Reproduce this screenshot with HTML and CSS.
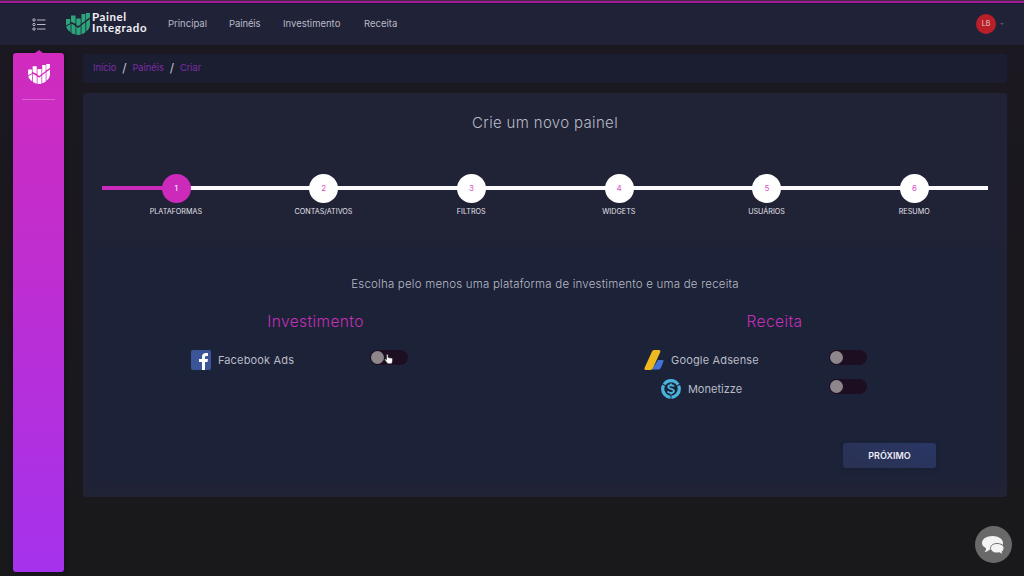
FILE: index.html
```html
<!DOCTYPE html>
<html lang="pt-BR">
<head>
<meta charset="utf-8">
<title>Painel Integrado</title>
<link rel="stylesheet" href="styles.css">
</head>
<body>
<svg class="defs" width="0" height="0" aria-hidden="true">
  <symbol id="mark" viewBox="0 0 24 22">
    <path d="M0 6h4.200v4.300L0 12.500zM5 2.500h4.500v8.300L5 8.800zM10.300 5.500h4.400v5.700l-2.600 2-1.800-1.500zM15.500 1h3.900v6.700l-3.900 3zM20 0h4v4.500L20 7zM.2 13.600L4.600 11v8.200C2.200 17.800.7 15.800.2 13.600zM5.400 10.600l4.100 2.500v8.500c-1.500-.2-2.900-.8-4.100-1.700zM10.300 13.700l1.800 1.300 2.600-2v8.600q-2.200.5-4.400.2zM15.500 12.300l3.900-3v10c-1.200 1-2.500 1.600-3.900 2zM20.200 8.800L24 6v5.500c0 2.800-1.500 5.300-3.800 7z"/>
  </symbol>
</svg>
<header class="topbar">
  <svg class="menu-icon" viewBox="0 0 14 13"><g fill="none" stroke="#b9bac5"><circle cx="2" cy="2" r="1.200"/><circle cx="2" cy="6.500" r="1.200"/><circle cx="2" cy="11" r="1.200"/><path d="M5 2h8.500M5 6.500h8.500M5 11h8.500"/></g></svg>
  <div class="brand">
    <svg class="brand-mark"><use href="#mark"/></svg>
    <div class="brand-name"><span class="brand-top">Painel</span><span class="brand-bottom">Integrado</span></div>
  </div>
  <nav class="nav">
    <a class="nav-principal">Principal</a><a class="nav-paineis">Painéis</a><a class="nav-invest">Investimento</a><a class="nav-receita">Receita</a>
  </nav>
  <div class="user"><span class="avatar">LB</span><span class="caret"></span></div>
</header>
<div class="layout">
  <aside class="sidebar">
    <svg class="side-mark"><use href="#mark"/></svg>
    <hr class="side-rule">
  </aside>
  <main class="main">
    <nav class="crumbs"><a>Início</a><i>/</i><a>Painéis</a><i>/</i><a>Criar</a></nav>
    <section class="card">
      <h1 class="title">Crie um novo painel</h1>
      <ol class="steps">
        <li class="step active"><span class="dot">1</span><span>PLATAFORMAS</span></li>
        <li class="step"><span class="dot">2</span><span>CONTAS/ATIVOS</span></li>
        <li class="step"><span class="dot">3</span><span>FILTROS</span></li>
        <li class="step"><span class="dot">4</span><span>WIDGETS</span></li>
        <li class="step"><span class="dot">5</span><span>USUÁRIOS</span></li>
        <li class="step"><span class="dot">6</span><span>RESUMO</span></li>
      </ol>
      <div class="panel">
        <p class="hint">Escolha pelo menos uma plataforma de investimento e uma de receita</p>
        <div class="columns">
          <div class="column">
            <h2 class="heading">Investimento</h2>
            <div class="row">
              <div class="platform facebook">
                <svg class="icon" viewBox="0 0 20 20"><rect width="20" height="20" rx="2" fill="#3b5598"/><path fill="#fff" d="M11 20v-8H8V9h3V6.800C11 4.200 12.500 3 15 3h2v3h-1.500C14.300 6 14 6.500 14 7.500V9h3l-.5 3H14v8z"/></svg>
                <span>Facebook Ads</span>
              </div>
              <div class="toggle">
                <svg class="pointer" viewBox="0 0 12 13"><path fill="#fff" stroke="#222" stroke-width=".7" d="M3 7.500V1.700c0-1.400 1.900-1.400 1.900 0V5c.5-.5 1.400-.4 1.700.2.600-.4 1.400-.2 1.700.4.800-.4 1.900 0 1.900 1v2.400c0 1.200-.8 1.700-.8 3.200H4.200C4 10.700 2 9.500 1 7.800.4 6.700 1.700 5.900 3 7.500z"/></svg>
              </div>
            </div>
          </div>
          <div class="column">
            <h2 class="heading receita">Receita</h2>
            <div class="row">
              <div class="platform adsense">
                <svg class="icon" viewBox="0 0 20 20"><path fill="#4272d8" d="M14 10h4.500q1.500 0 1 1.500l-2.500 6q-.7 2-2.500 2H8z"/><path fill="#edb91e" d="M8 1.500Q8.600 0 10 0h5q2 0 1.300 2L9 18q-.8 2-2.500 2H1.500Q0 20 .5 18z"/></svg>
                <span>Google Adsense</span>
              </div>
              <div class="toggle"></div>
            </div>
            <div class="row">
              <div class="platform monetizze">
                <svg class="icon" viewBox="0 0 20 20"><circle cx="10" cy="10" r="8.300" fill="none" stroke="#48b4dc" stroke-width="3.200" stroke-dasharray="16.380 1" stroke-dashoffset="-13.500"/><path fill="none" stroke="#48b4dc" stroke-width="1.800" d="M13 7.500C12.500 6 7.200 5.500 7.200 8c0 2.300 5.800 1.500 5.800 4 0 2.600-5.700 2.200-6.200.3M10 4.500v2M10 14v1.500"/></svg>
                <span>Monetizze</span>
              </div>
              <div class="toggle"></div>
            </div>
          </div>
        </div>
        <button class="next">PRÓXIMO</button>
      </div>
    </section>
  </main>
</div>
<button class="chat" aria-label="Chat"><svg viewBox="0 0 24 20"><path fill="#f3f3f3" d="M10.500 1C16.500 1 21 4 21 8s-4.500 7-10.500 7q-1.500 0-3-.3Q5 17 2.500 17 4.500 15 4 13.200 0 11.200 0 8c0-4 4.500-7 10.500-7z"/><path fill="#f3f3f3" stroke="#696969" stroke-width="1" d="M15 8.500c4 0 7 2 7 4.700 0 1.600-.8 2.800-2 3.500q0 1.300 1 2.500-2 0-3.500-1.500-1.200.3-2.500.3c-4 0-6.500-2.200-6.500-4.800s2.500-4.700 6.500-4.700z"/></svg></button>
</body>
</html>
```
FILE: styles.css
```css
* { box-sizing: border-box; }
body {
  margin: 0;
  height: 576px;
  overflow: hidden;
  background: linear-gradient(#1b1822, #1a181d 50%, #19191c);
  color: #b8bac5;
  font: 11px/16px Inter, "Noto Sans", sans-serif;
}
h1, h2, p, ol { margin: 0; padding: 0; font-weight: 300; }
.defs { display: block; height: 0; }
.topbar {
  height: 45px;
  padding: 3px 0 0 32px;
  background: linear-gradient(#3a3040 1px, #a61898 1px 3px, #15172c 3px 4px, #202238 4px);
  display: flex;
  align-items: center;
}
.menu-icon { width: 14px; height: 13px; }
.brand { display: flex; margin-left: 20px; width: 82px; height: 26px; align-items: center; }
.brand-mark { width: 24px; height: 22px; fill: #2ca57c; flex: none; }
.brand-name { margin: -4px 0 0 2px; font-family: Lato, sans-serif; font-weight: 700; color: #f0f0f5; font-size: 11.500px; display: flex; flex-direction: column; }
.brand-top { line-height: 11px; letter-spacing: .6px; }
.brand-bottom { line-height: 11px; letter-spacing: .65px; }
.nav { display: flex; margin-left: 20px; font-size: 9.500px; white-space: nowrap; }
.nav a { display: block; }
.nav-principal { width: 61px; }
.nav-paineis { width: 54px; letter-spacing: -.1px; }
.nav-invest { width: 81px; }
.user { margin-left: auto; margin-right: 20px; display: flex; align-items: center; gap: 4px; }
.avatar { width: 20px; height: 20px; border-radius: 50%; background: #b91f29; color: #e4c6c6; font-size: 7px; line-height: 20px; text-align: center; }
.caret { border: 2px solid transparent; border-top-color: #55576c; border-bottom: 0; }
.layout { display: flex; padding: 8px 17px 0 13px; }
.sidebar {
  position: relative;
  width: 51px;
  height: 519px;
  border-radius: 3px;
  background: linear-gradient(#d02bbd, #a532ec);
  box-shadow: 0 0 5px #111018;
  display: flex;
  flex-direction: column;
  align-items: center;
}
.sidebar::before { content: ""; position: absolute; top: -3px; left: 22px; border: 4px solid transparent; border-top: 0; border-bottom: 3px solid #d02bbd; }
.side-mark { width: 22px; height: 20px; margin-top: 11px; fill: #fff; }
.side-rule { width: 33px; height: 1px; margin: 15px 0 0; border: 0; background: #dc63d0; }
.main { flex: 1; margin-left: 19px; padding-top: 1px; }
.crumbs { height: 29px; padding: 0 0 1px 10px; background: #1b1e31; display: flex; align-items: center; font-size: 9.300px; color: #7d2ca6; border-radius: 3px; }
.crumbs i { width: 16px; text-align: center; font-size: 12px; color: #c5c6cd; font-style: normal; }
.card { height: 404px; margin-top: 10px; padding-top: 20px; border-radius: 3px; background: #202236; }
.title { text-align: center; font-size: 15px; line-height: 20px; letter-spacing: .34px; }
.steps { display: flex; margin: 41px 19px 0; list-style: none; }
.step {
  flex: 1;
  display: flex;
  flex-direction: column;
  align-items: center;
  font-size: 7.200px;
  line-height: 18px;
  font-weight: 400;
  color: #e0e1e8;
  background: linear-gradient(#fbfafd, #fbfafd) 0 12px / 100% 4px no-repeat;
}
.step.active { background: linear-gradient(90deg, #cc2abb 50%, #fbfafd 50%) 0 12px / 100% 4px no-repeat; }
.dot { width: 29px; height: 29px; margin-left: .6px; border-radius: 50%; background: #fff; color: #d44fca; text-align: center; font-size: 8px; line-height: 29px; }
.active .dot { background: #cc2abb; color: #fff; }
.panel { height: 233px; margin: 27px 13px 0; padding-top: 28px; background: #1c2237; box-shadow: 0 0 6px #1c2237; display: flex; flex-direction: column; }
.hint { text-align: center; font-size: 11.500px; line-height: 16px; letter-spacing: .2px; }
.columns { display: flex; margin: 18px -10px 0; }
.column { flex: 1; }
.heading { text-align: center; color: #c62fb7; font-size: 15.500px; line-height: 24px; letter-spacing: .4px; margin-bottom: 11px; }
.row { display: grid; grid-template-columns: 146px 146px; justify-content: center; justify-items: center; height: 29px; }
.platform { display: flex; align-items: center; gap: 7px; height: 30px; white-space: nowrap; color: #b9bbc7; letter-spacing: .16px; }
.monetizze { letter-spacing: 0; }
.icon { width: 20px; height: 20px; flex: none; }
.toggle { position: relative; width: 38px; height: 15px; margin-top: 5px; border-radius: 8px; background: #1e0e21; }
.toggle::before { content: ""; display: block; width: 13px; height: 13px; margin: 1px; border-radius: 50%; background: #8d878c; }
.pointer { position: absolute; left: 14px; top: 3px; width: 10px; height: 12px; }
.next { width: 93px; height: 25px; margin: auto 58px 13px auto; border: 0; border-radius: 3px; background: linear-gradient(20deg, #293152, #2a3765); box-shadow: 0 2px 4px #182035; color: #eceef8; font: 600 9px Inter, sans-serif; }
.chat { position: absolute; right: 12px; bottom: 13px; width: 37px; height: 37px; padding: 0; border: 0; border-radius: 50%; background: #696969; display: grid; place-items: center; }
.chat svg { width: 24px; height: 20px; margin-left: 1px; }
```
